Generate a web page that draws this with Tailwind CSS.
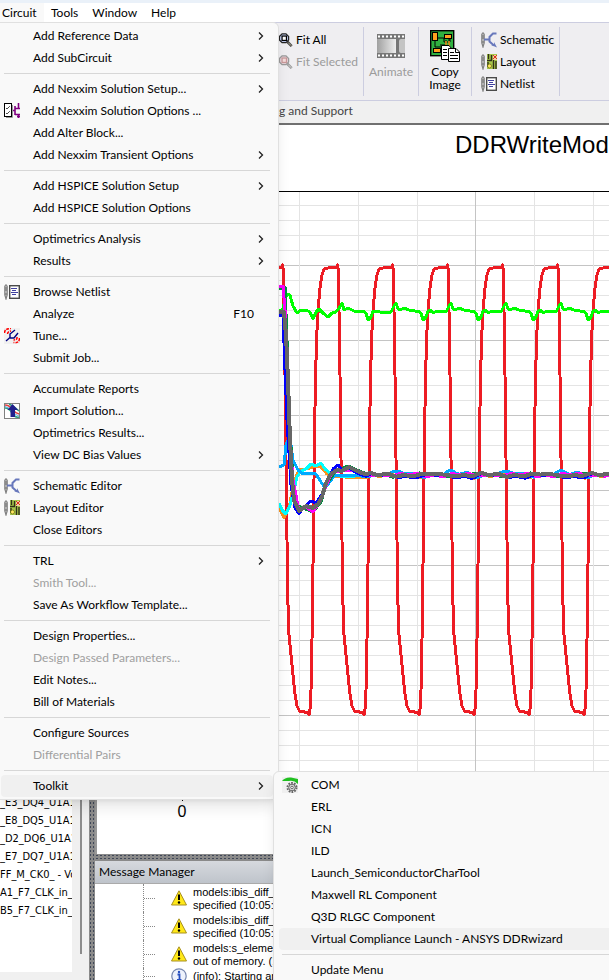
<!DOCTYPE html>
<html lang="en">
<head>
    <meta charset="UTF-8">
    <meta name="viewport" content="width=device-width, initial-scale=1.0">
    <title>Circuit Design</title>
    <script src="https://cdn.jsdelivr.net/npm/@tailwindcss/browser@4"></script>
</head>
<body class="relative flex h-screen flex-col overflow-hidden bg-[#f0f0f0] font-[Lato,sans-serif] text-[12px] leading-4 text-black">

    <!-- Icon sprites -->
    <svg class="hidden" aria-hidden="true">
        <symbol id="pen" viewBox="0 0 16 16">
            <path d="M.8 2.5Q2 -.8 3.2 2.5V11L2 15L.8 11Z" fill="#d0d0d0" stroke="#808080" stroke-width="1.2"/>
            <path d="M2 3V7M2 9V11" stroke="#666"/>
        </symbol>
        <symbol id="options" viewBox="0 0 16 16">
            <path d="M2 14.5H8.5V2" fill="none" stroke="#999"/>
            <rect x=".5" y=".5" width="7" height="13" fill="#fff" stroke="#000"/>
            <path d="M2 5l1 1l3-3M2 10l1 1l3-3" fill="none" stroke="#000" stroke-dasharray="1 .6"/>
            <path d="M9 7.5H11M11 3V12M11 5.5H16M14.5 0V5M11 11.5H16M14.5 11V15M13 13.5H16" fill="none" stroke="#800080" stroke-width="1.6"/>
        </symbol>
        <symbol id="netlist" viewBox="0 0 16 16">
            <use href="#pen"/>
            <rect x="5.7" y="1.7" width="9.6" height="12.6" fill="#fff" stroke="#4a4a4a" stroke-width="1.4"/>
            <path d="M7 4.5H13M8 6.5H12M7 8.5H14M8 10.5H12" stroke="#4040a0"/>
        </symbol>
        <symbol id="tune" viewBox="0 0 16 16">
            <rect width="16" height="16" fill="#f0f0f0"/>
            <path d="M.5 5Q.5 .5 7 .5M3.5 6Q3.5 3.5 7 3M15.5 10Q15.5 15.5 9.5 14.5M13 9Q13.5 12 9.5 12" fill="none" stroke="#f00" stroke-width="1.5" stroke-dasharray="3 1"/>
            <path d="M2 13L6 9.5M6 10V6L11 2M6 10H10L14 5" fill="none" stroke="#000080" stroke-width="1.4"/>
        </symbol>
        <symbol id="import" viewBox="0 0 16 16">
            <rect x=".5" y=".5" width="15" height="15" fill="#fff" stroke="#808080"/>
            <path d="M1 2Q5 2 8 6T15 11" fill="none" stroke="#e04040" stroke-width="1.5"/>
            <path d="M1 5Q5 5 8 10T15 14M5 1Q10 3 15 8" fill="none" stroke="#30a080" stroke-width="1.5"/>
            <path d="M1 3.5Q5 4 8 8T15 13" fill="none" stroke="#60b0e8"/>
            <path d="M8.5 1L14 7H11V14H6.5V7H3.5Z" fill="#20208c"/>
        </symbol>
        <symbol id="schematic" viewBox="0 0 16 16">
            <use href="#pen"/>
            <path d="M3 7.5H8M15.5 1.5H12L8.5 5V9.5L13 13.5" fill="none" stroke="#6878bc" stroke-width="2"/>
            <path d="M10 13H13V10L16 15.5Z" fill="#6878bc"/>
        </symbol>
        <symbol id="layout" viewBox="0 0 16 16">
            <rect x="6" width="10" height="15" fill="#a8c84c"/>
            <use href="#pen"/>
            <path d="M7.5 0V5M10.5 1V6M6 6.5H11M7 8V13M12.5 6V15M15 7V15" fill="none" stroke="#303018" stroke-width="1.4"/>
            <rect x="12" y="1" width="4" height="5" fill="#f4d0a0"/>
            <path d="M12 1L16 5M16 1L12 5" stroke="#d83020"/>
            <circle cx="8.5" cy="12" r="2" fill="#ffe860" stroke="#505000" stroke-width=".6"/>
        </symbol>
        <symbol id="com" viewBox="0 0 16 16">
            <rect width="16" height="16" fill="#f0f0f0"/>
            <path d="M0 4Q3 0 9 .5L16 2V7Q12 3 7 4Q4 4 0 4Z" fill="#20c020"/>
            <circle cx="10" cy="10.5" r="4.5" fill="none" stroke="#666" stroke-width="2" stroke-dasharray="1.7 1.13"/>
            <circle cx="10" cy="10.5" r="3.3" fill="#ddd" stroke="#666"/>
            <circle cx="10" cy="10.5" r="1.3" fill="#fff" stroke="#666"/>
        </symbol>
        <symbol id="zoom" viewBox="0 0 16 16">
            <path d="M9.5 10L14.5 15" stroke="#444" stroke-width="3"/>
            <path d="M10.5 11L14 14.5" stroke="#c8c0a0"/>
            <path d="M3.5 1H8L11 4V8L8 11H3.5L.5 8V4Z" fill="#c0ccf0" stroke="#222" stroke-width="1.4"/>
            <rect x="3.5" y="3.5" width="5" height="5" fill="#fff" stroke="#000" stroke-width="1.4"/>
        </symbol>
        <symbol id="zoom-off" viewBox="0 0 16 16">
            <path d="M9.5 10L14.5 15" stroke="#999" stroke-width="3"/>
            <path d="M10.5 11L14 14.5" stroke="#ddd"/>
            <path d="M3.5 1H8L11 4V8L8 11H3.5L.5 8V4Z" fill="#e4d0d8" stroke="#999" stroke-width="1.4"/>
            <rect x="3.5" y="3.5" width="5" height="5" fill="#f4dcdc" stroke="#c89898" stroke-width="1.4"/>
        </symbol>
        <symbol id="warning" viewBox="0 0 16 16">
            <path d="M8 .8L15.5 15H.5Z" fill="#ffe818" stroke="#a89020" stroke-linejoin="round"/>
            <path d="M8 4.5V10" stroke="#000" stroke-width="2"/>
            <circle cx="8" cy="12.5" r="1.2"/>
        </symbol>
        <symbol id="info" viewBox="0 0 16 16">
            <circle cx="8" cy="8" r="7.2" fill="#eef2fc" stroke="#7888b0" stroke-width="1.2"/>
            <path d="M6.5 6.5H8.5V12M6 12H10.5" fill="none" stroke="#2850c0" stroke-width="1.8"/>
            <circle cx="8" cy="4" r="1.2" fill="#2850c0"/>
        </symbol>
    </svg>

    <!-- Menu bar -->
    <nav class="flex h-[22px] shrink-0 border-t-3 border-[#eaf1f9] bg-white">
        <button class="w-11 bg-[#f9f9f9] pl-[2px] text-left">Circuit</button>
        <button class="ml-[7px]">Tools</button>
        <button class="ml-[14px]">Window</button>
        <button class="ml-[14px]">Help</button>
    </nav>

    <!-- Ribbon -->
    <header class="shrink-0 border-b-2 border-[#707070]">
        <div class="flex h-[79px] border-y border-[#cccde0] bg-[#efeef1] py-1 pl-[279px]">
            <div class="w-[85px] shrink-0 border-r border-[#cccde0] pt-[2px]">
                <button class="flex h-[22px] items-center gap-[3px]"><svg class="size-[14px]"><use href="#zoom"/></svg>Fit All</button>
                <button class="flex h-[22px] items-center gap-[3px] whitespace-nowrap text-[#9b9b9b]" disabled><svg class="size-[14px] shrink-0"><use href="#zoom-off"/></svg>Fit Selected</button>
            </div>
            <button class="flex w-[55px] shrink-0 flex-col items-center gap-[6px] border-r border-[#cccde0] pt-[7px] text-[#9b9b9b]" disabled>
                <svg class="h-6 w-7" viewBox="0 0 28 24">
                    <defs><linearGradient id="film"><stop stop-color="#a0a0a0"/><stop offset="1" stop-color="#eee"/></linearGradient></defs>
                    <rect width="28" height="24" fill="#777"/>
                    <rect y="5" width="19" height="14" fill="url(#film)"/>
                    <path d="M22 7q0-2 2-2h4v14h-4q-2 0-2-2z" fill="#c4c4c4"/>
                    <path d="M1 2.5H28M1 21.5H28" stroke="#fff" stroke-width="2" stroke-dasharray="2 2"/>
                </svg>
                Animate
            </button>
            <button class="flex w-[53px] shrink-0 flex-col items-center gap-[3px] border-r border-[#cccde0] pt-[3px] leading-[13px]">
                <svg class="h-8 w-[30px]" viewBox="0 0 30 32">
                    <rect x=".7" y=".7" width="23" height="25" fill="#30b040" stroke="#000" stroke-width="1.4"/>
                    <path d="M7 8H14V12H20V6M5 10V17H13M10 15H16V20M10 19V23M19 8V18M16 10V16" fill="none" stroke="#000"/>
                    <path d="M16 11V17M19 11V17" stroke="#f8a020" stroke-width="1.5"/>
                    <g fill="#ffa020" stroke="#000"><rect x="2.5" y="2.5" width="5" height="8"/><rect x="14.5" y="4.5" width="7" height="4"/><rect x="3.5" y="18.5" width="7" height="4"/></g>
                    <path d="M11.5 15.5H19L22 19V29.5H11.5Z" fill="#fff" stroke="#000"/>
                    <path d="M18.5 18.5H26L29.5 22V31.5H18.5Z" fill="#fff" stroke="#000"/>
                    <path d="M25.5 18.5V22.5H29.5M20 22.5H24M20 25.5H28M20 28.5H28M13 19.5H17M13 22.5H17M13 25.5H17" fill="none" stroke="#000"/>
                </svg>
                <span>Copy<br>Image</span>
            </button>
            <div class="w-[88px] shrink-0 border-r border-[#cccde0] pt-[2px] pl-[9px]">
                <button class="flex h-[22px] items-center gap-[3px]"><svg class="size-4"><use href="#schematic"/></svg>Schematic</button>
                <button class="flex h-[22px] items-center gap-[3px]"><svg class="size-4"><use href="#layout"/></svg>Layout</button>
                <button class="flex h-[22px] items-center gap-[3px]"><svg class="size-4"><use href="#netlist"/></svg>Netlist</button>
            </div>
        </div>
        <div class="h-[22px] pt-[2px] pl-[279px] text-[#444]">g and Support</div>
    </header>

    <main class="flex min-h-0 flex-1">
        <!-- Trace list -->
        <aside class="flex w-[89px] shrink-0 gap-2 pb-2">
            <ul class="flex w-[72px] flex-col overflow-hidden bg-white pt-[669px] font-['DejaVu_Sans_Condensed','DejaVu_Sans',sans-serif] text-[11px] leading-[18px] whitespace-nowrap">
                <li>_E3_DQ4_U1A1</li>
                <li>_E8_DQ5_U1A1</li>
                <li>_D2_DQ6_U1A1</li>
                <li>_E7_DQ7_U1A1</li>
                <li>FF_M_CK0_ - Vo</li>
                <li>A1_F7_CLK_in_p</li>
                <li>B5_F7_CLK_in_n</li>
            </ul>
            <div class="mb-[18px] w-[2px] bg-[#8c8c8c]"></div>
        </aside>
        <div class="w-[6px] shrink-0 bg-[#8a8a8a] bg-[radial-gradient(#404858_1px,transparent_1px)] bg-size-[3px_4px]"></div>

        <section class="flex min-w-0 flex-1 flex-col">
            <!-- Report plot -->
            <svg class="h-[729px] w-full shrink-0 border-l-2 border-[#999] bg-white" viewBox="97 125 512 729" preserveAspectRatio="xMinYMin slice">
                <text x="455" y="153" font-size="24" class="font-['Liberation_Sans',Arial,sans-serif]">DDRWriteMode</text>
                <g id="grid" shape-rendering="crispEdges"></g>
                <g id="traces" fill="none" stroke-linejoin="round" shape-rendering="crispEdges"></g>
                <path d="M182.5 790V801" stroke="#000"/>
                <text x="182" y="817" font-size="16" text-anchor="middle" class="font-['Liberation_Sans',Arial,sans-serif]">0</text>
            </svg>
            <div class="h-[7px] shrink-0 bg-[#8a8a8a] bg-[radial-gradient(#404858_1px,transparent_1px)] bg-size-[4px_3px]"></div>

            <!-- Message manager -->
            <h2 class="h-[23px] shrink-0 border-b border-[#aaa] bg-linear-to-b from-[#d6d9de] to-[#bfc4cb] pt-[3px] pl-1">Message Manager</h2>
            <ul class="min-h-0 flex-1 overflow-hidden bg-white pl-12 font-['Liberation_Sans',Arial,sans-serif] text-[11px] leading-[13px] whitespace-nowrap">
                <li class="flex h-7 border-l border-dotted border-[#888]">
                    <span class="mt-[14px] mr-4 w-[11px] border-t border-dotted border-[#888]"></span>
                    <svg class="mt-[6px] mr-[6px] size-4"><use href="#warning"/></svg>
                    <p class="pt-[2px]">models:ibis_diff_pair<br>specified (10:05:22)</p>
                </li>
                <li class="flex h-7 border-l border-dotted border-[#888]">
                    <span class="mt-[14px] mr-4 w-[11px] border-t border-dotted border-[#888]"></span>
                    <svg class="mt-[6px] mr-[6px] size-4"><use href="#warning"/></svg>
                    <p class="pt-[2px]">models:ibis_diff_pair<br>specified (10:05:22)</p>
                </li>
                <li class="flex h-7 border-l border-dotted border-[#888]">
                    <span class="mt-[14px] mr-4 w-[11px] border-t border-dotted border-[#888]"></span>
                    <svg class="mt-[6px] mr-[6px] size-4"><use href="#warning"/></svg>
                    <p class="pt-[2px]">models:s_element<br>out of memory. (10:05)</p>
                </li>
                <li class="flex h-7 border-l border-dotted border-[#888]">
                    <span class="mt-2 mr-4 w-[11px] border-t border-dotted border-[#888]"></span>
                    <svg class="mr-[6px] size-4"><use href="#info"/></svg>
                    <p class="pt-[2px]">(info): Starting analysis</p>
                </li>
            </ul>
        </section>
    </main>

    <!-- Circuit menu, open over the window -->
    <ul id="circuit-menu" class="absolute top-[22px] left-0 w-[279px] rounded-tr-md border-y border-r border-[#e0e0e0] bg-[#f9f9f9] py-[2px] shadow-lg"></ul>

    <script>
        // [label, { icon, key, sub, off }], or null for a separator
        const toolkitMenu = [
            ['COM', { icon: 'com' }],
            ['ERL'],
            ['ICN'],
            ['ILD'],
            ['Launch_SemiconductorCharTool'],
            ['Maxwell RL Component'],
            ['Q3D RLGC Component'],
            ['Virtual Compliance Launch - ANSYS DDRwizard', { active: true }],
            null,
            ['Update Menu']
        ];

        const circuitMenu = [
            ['Add Reference Data', { sub: true }],
            ['Add SubCircuit', { sub: true }],
            null,
            ['Add Nexxim Solution Setup...', { sub: true }],
            ['Add Nexxim Solution Options ...', { icon: 'options' }],
            ['Add Alter Block...'],
            ['Add Nexxim Transient Options', { sub: true }],
            null,
            ['Add HSPICE Solution Setup', { sub: true }],
            ['Add HSPICE Solution Options'],
            null,
            ['Optimetrics Analysis', { sub: true }],
            ['Results', { sub: true }],
            null,
            ['Browse Netlist', { icon: 'netlist' }],
            ['Analyze', { key: 'F10' }],
            ['Tune...', { icon: 'tune' }],
            ['Submit Job...'],
            null,
            ['Accumulate Reports'],
            ['Import Solution...', { icon: 'import' }],
            ['Optimetrics Results...'],
            ['View DC Bias Values', { sub: true }],
            null,
            ['Schematic Editor', { icon: 'schematic' }],
            ['Layout Editor', { icon: 'layout' }],
            ['Close Editors'],
            null,
            ['TRL', { sub: true }],
            ['Smith Tool...', { off: true }],
            ['Save As Workflow Template...'],
            null,
            ['Design Properties...'],
            ['Design Passed Parameters...', { off: true }],
            ['Edit Notes...'],
            ['Bill of Materials'],
            null,
            ['Configure Sources'],
            ['Differential Pairs', { off: true }],
            null,
            ['Toolkit', { sub: true, active: true, items: toolkitMenu }]
        ];

        const chevron = '<svg class="h-[10px] w-[6px]" viewBox="0 0 6 10"><path d="M1 1.5L4.5 5L1 8.5" fill="none" stroke="#222" stroke-width="1.3"/></svg>';

        function menuItem(item) {
            if (!item) return '<li class="mr-2 ml-1 flex h-[9px] items-center"><hr class="w-full border-[#d7d7d7]"></li>';
            const [label, o = {}] = item;
            return `<li class="relative pr-[5px] pl-px">
                <button class="flex h-[22px] w-full items-center rounded pr-[9px] pl-[3px] text-left whitespace-nowrap disabled:text-[#a0a0a0] ${o.active ? 'bg-[#f0f0f0]' : ''}" ${o.off ? 'disabled' : ''}>
                    <span class="w-[29px] shrink-0">${o.icon ? `<svg class="size-4"><use href="#${o.icon}"/></svg>` : ''}</span>
                    <span class="flex-1">${label}</span>
                    ${o.key ? `<span class="pr-[10px]">${o.key}</span>` : ''}
                    ${o.sub ? chevron : ''}
                </button>
                ${o.items ? `<ul class="absolute -top-1 left-[273px] w-[350px] rounded-md border border-[#e0e0e0] bg-[#f9f9f9] py-[2px] pl-1 shadow-lg">${o.items.map(menuItem).join('')}</ul>` : ''}
            </li>`;
        }
        document.getElementById('circuit-menu').innerHTML = circuitMenu.map(menuItem).join('');

        // Grid: light lines every 15, dark every fifth
        let grid = '';
        for (let k = 1; k < 41; k++) {
            grid += `<path d="M97 ${190.5 + k * 15}H1200" stroke="${k % 5 ? '#e4e4e4' : '#c4c4c4'}"/>`;
        }
        for (let k = 0; k < 16; k++) {
            grid += `<path d="M${Math.round(299 + k * 58.8) + 0.5} 192V790" stroke="${k % 5 === 3 ? '#c4c4c4' : '#e4e4e4'}"/>`;
        }
        grid += '<path d="M97 191.5H1200" stroke="#000"/>';
        document.getElementById('grid').innerHTML = grid;

        const period = 55;
        function repeat(points, from, to) {
            const out = [];
            for (let i = from; i < to; i++) points.forEach(([x, y]) => out.push([x + i * period, y]));
            return out;
        }

        const strobe = [[309, 715], [310, 709], [311, 690], [312, 640], [313, 565], [314, 480], [315, 407], [316, 360], [317, 330],
            [318.5, 305], [320, 288], [322, 275], [324, 269], [328, 268], [330, 267], [333, 268], [335, 267], [337, 268], [337.5, 265],
            [338.5, 272], [339, 310], [340, 375], [341, 458], [342, 540], [343, 605], [344, 635], [346, 655], [348, 675], [350, 694],
            [352, 706], [355, 712], [358, 711], [361, 713], [363, 712]];
        const supplyStart = [[279, 311], [283, 309], [285, 300], [287, 294], [290, 295], [293, 306], [297, 313], [301, 310], [306, 310],
            [310, 312], [313, 319], [316, 312], [319, 309], [323, 313], [328, 317], [332, 313], [336, 312], [340, 307], [342, 303],
            [344, 310], [348, 308], [354, 311], [363, 311], [366, 313], [368, 320], [371, 317], [373, 311], [380, 312]];
        const supply = [[391, 312], [394, 306], [396, 303], [398, 309], [400, 310], [404, 308], [409, 310], [413, 310], [415, 311], [418, 311], [421, 313],
            [423, 320], [426, 317], [428, 311], [430, 310], [432, 312], [435, 312], [443, 311]];

        // Small ripple once the signals have settled
        function settle(phase, amp, mid) {
            const out = [];
            for (let x = 366; x < 1200; x += 3) {
                const t = (x - 366) / period * Math.PI * 2;
                out.push([x, mid + amp * Math.sin(t + phase) + amp * 0.7 * Math.sin(t * 3 + phase) + 0.5 * Math.sin(x * 1.7)]);
            }
            return out;
        }

        const traces = [
            ['#ed1c24', 3, repeat(strobe, -1, 16)],
            ['#00ff00', 3, supplyStart.concat(repeat(supply, 0, 14))],
            ['#f7941d', 3, [[279, 508], [284, 518], [289, 508], [294, 482], [299, 470], [306, 469], [313, 467], [320, 466], [327, 474], [334, 476], [345, 477]].concat(settle(2, 1, 476))],
            ['#00ffff', 3, [[279, 503], [282, 510], [286, 514], [290, 505], [294, 490], [297, 477], [301, 471], [306, 469], [311, 464], [316, 466], [321, 463], [325, 469], [331, 474], [340, 476], [355, 476]].concat(settle(4, 1, 475))],
            ['#00aaff', 3, [[279, 467], [284, 465], [286, 445], [288, 440], [291, 445], [293, 460], [298, 470], [303, 474], [310, 473], [316, 474], [321, 482], [325, 488], [329, 483], [334, 476], [340, 475], [355, 475]].concat(settle(1, 2, 474))],
            ['#009040', 3, [[279, 289], [285, 287], [287, 340], [288, 380], [290, 430], [293, 480], [297, 505], [303, 508], [313, 512], [321, 502], [326, 485], [335, 472], [348, 466], [357, 470]].concat(settle(5, 1, 475))],
            ['#ff00ff', 3, [[279, 287], [283, 286], [285, 310], [287, 360], [290, 440], [293, 480], [299, 511], [306, 507], [313, 512], [318, 504], [323, 493], [332, 472], [340, 471], [355, 470]].concat(settle(0, 1, 475))],
            ['#0000ff', 3, [[279, 315], [283, 316], [285, 370], [287, 420], [291, 485], [295, 508], [299, 514], [303, 508], [311, 501], [316, 503], [322, 494], [327, 481], [333, 469], [338, 465], [342, 470], [349, 468], [357, 473]].concat(settle(3, 1.5, 476))],
            ['#666666', 4, [[279, 312], [284, 312], [286, 335], [288, 380], [290, 440], [292, 480], [294, 500], [299, 511], [306, 506], [313, 508], [318, 504], [322, 497], [326, 483], [330, 475], [337, 470], [342, 471], [349, 467], [357, 471]].concat(settle(3.5, 1, 475))]
        ];
        document.getElementById('traces').innerHTML = traces.map(([color, width, pts]) =>
            `<polyline stroke="${color}" stroke-width="${width}" points="${pts.map(p => p.join(',')).join(' ')}"/>`).join('');
    </script>
</body>
</html>
